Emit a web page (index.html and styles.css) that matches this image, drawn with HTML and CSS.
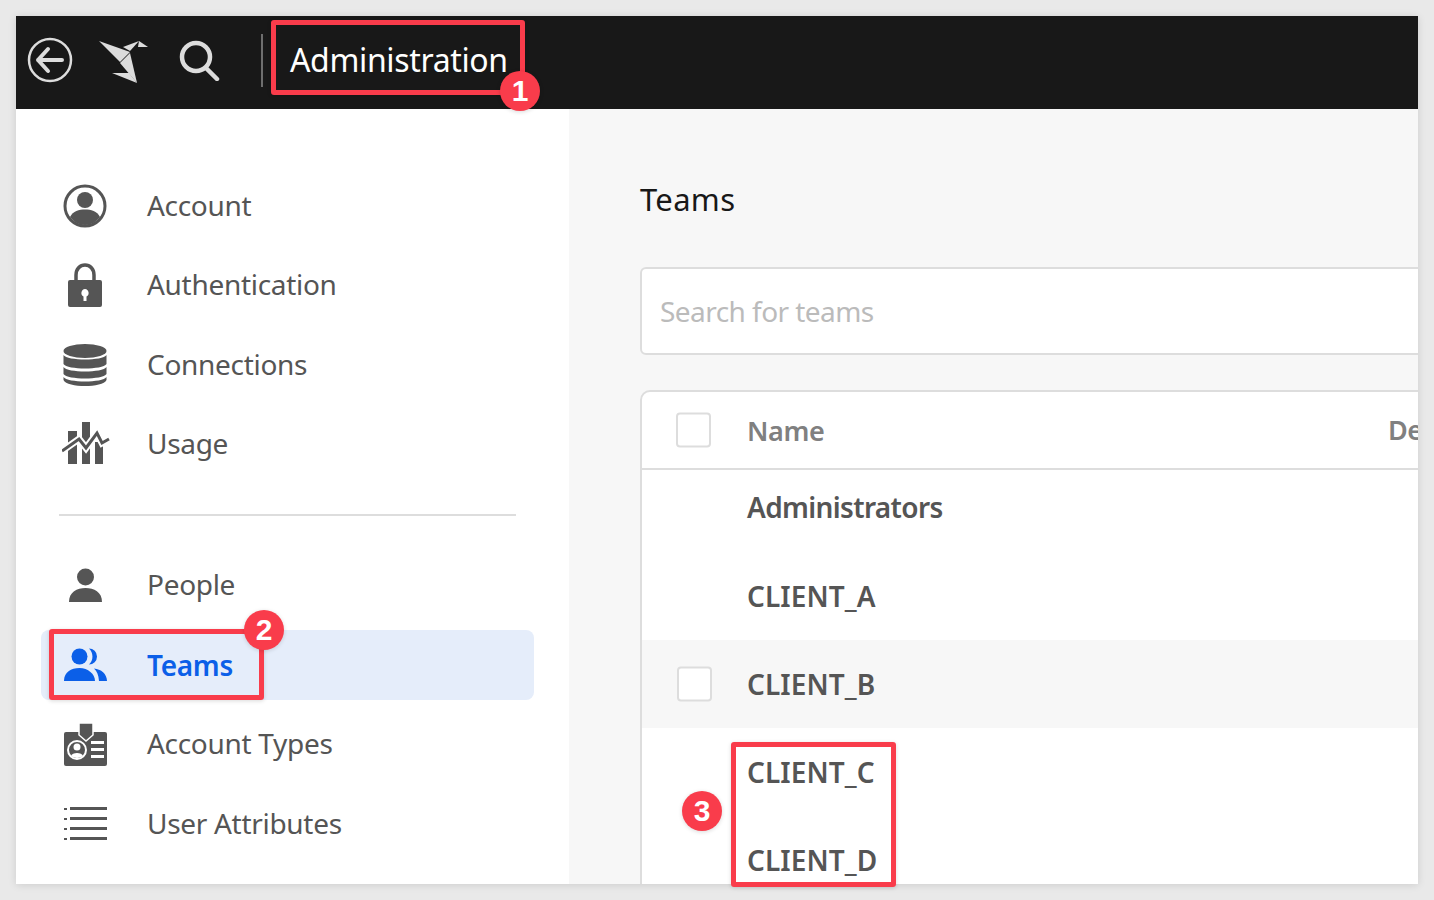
FILE: index.html
```html
<!DOCTYPE html>
<html lang="en">

<head>
    <meta charset="UTF-8">
    <title>Administration</title>
    <link rel="stylesheet" href="styles.css">
</head>

<body>
    <div class="page">
        <div class="window">
            <header class="topbar">
                <svg class="top-icon back-icon" width="46" height="46" viewBox="0 0 46 46">
                    <circle cx="23" cy="23" r="21" fill="none" stroke="#dcdcdc" stroke-width="2.500"/>
                    <path d="M11 23H35M21 12L11 23L21 34" fill="none" stroke="#dcdcdc" stroke-width="4" stroke-linecap="round" stroke-linejoin="round"/>
                </svg>
                <svg class="top-icon logo-icon" width="50" height="44" viewBox="0 0 50 44">
                    <path d="M1 0L32 11L22 21Z" fill="#dcdcdc"/>
                    <path d="M25 6L41 0L32 10Z" fill="#dcdcdc"/>
                    <path d="M41 0L50 6L40 6Z" fill="#dcdcdc"/>
                    <path d="M22 22L32 12L39 42Z" fill="#dcdcdc"/>
                    <path d="M14 32L31 32L39 42Z" fill="#dcdcdc"/>
                </svg>
                <svg class="top-icon search-icon" width="42" height="42" viewBox="0 0 42 42">
                    <circle cx="18" cy="18" r="14" fill="none" stroke="#dcdcdc" stroke-width="4.500"/>
                    <path d="M28 29L39 40" stroke="#dcdcdc" stroke-width="4.500" stroke-linecap="round"/>
                </svg>
                <div class="top-divider"></div>
                <div class="top-title">Administration</div>
            </header>

            <div class="content">
                <nav class="sidebar">
                    <a class="nav-item">
                        <svg width="44" height="44" viewBox="0 0 44 44">
                            <circle cx="22" cy="22" r="20" fill="none" stroke="#555" stroke-width="3"/>
                            <circle cx="22" cy="16" r="8" fill="#555"/>
                            <path d="M7 33C10 27 16 25.500 22 25.500C28 25.500 34 27 37 33C33 38 28 41 22 41C16 41 11 38 7 33Z" fill="#555"/>
                        </svg>
                        <span>Account</span>
                    </a>
                    <a class="nav-item">
                        <svg width="44" height="44" viewBox="0 0 44 44">
                            <path d="M13 20V12C13 6 17 2 22 2C27 2 31 6 31 12V20" fill="none" stroke="#555" stroke-width="3.500"/>
                            <path fill-rule="evenodd" d="M7 17H37A2 2 0 0 1 39 19V42A2 2 0 0 1 37 44H7A2 2 0 0 1 5 42V19A2 2 0 0 1 7 17ZM22 26A4 4 0 0 0 20.500 33.500V38H23.500V33.500A4 4 0 0 0 22 26Z" fill="#555"/>
                        </svg>
                        <span>Authentication</span>
                    </a>
                    <a class="nav-item">
                        <svg width="44" height="44" viewBox="0 0 44 44">
                            <ellipse cx="22" cy="8" rx="21.500" ry="7" fill="#555"/>
                            <path d="M0.500 12C4 18 40 18 43.500 12V21C40 27 4 27 0.500 21Z" fill="#555"/>
                            <path d="M0.500 24C4 30 40 30 43.500 24V31C40 37 4 37 0.500 31Z" fill="#555"/>
                            <path d="M0.500 34C4 40 40 40 43.500 34V37C40 45 4 45 0.500 37Z" fill="#555"/>
                        </svg>
                        <span>Connections</span>
                    </a>
                    <a class="nav-item">
                        <svg class="wide-icon" width="48" height="44" viewBox="0 0 48 44">
                            <path d="M6 9H15V42H6ZM20 0H28V42H20ZM33 20H41V42H33Z" fill="#555"/>
                            <path d="M0 29L17 17L24 26L35 11L40 21L47 17" fill="none" stroke="#fff" stroke-width="7"/>
                            <path d="M0 29L17 17L24 26L35 11L40 21L47 17" fill="none" stroke="#555" stroke-width="3"/>
                        </svg>
                        <span>Usage</span>
                    </a>

                    <div class="nav-divider"></div>

                    <a class="nav-item">
                        <svg width="44" height="44" viewBox="0 0 44 44">
                            <circle cx="22.500" cy="14" r="8.500" fill="#555"/>
                            <path d="M6 39C6 29 14 25 22.500 25C31 25 39 29 39 39Z" fill="#555"/>
                        </svg>
                        <span>People</span>
                    </a>
                    <a class="nav-item active">
                        <svg width="44" height="44" viewBox="0 0 44 44">
                            <circle cx="16.500" cy="13.500" r="8" fill="#0b5fe8"/>
                            <path d="M26 5.500A8 8 0 0 1 26 21.500A11 11 0 0 0 26 5.500Z" fill="#0b5fe8"/>
                            <path d="M1 38C1 29 8 25 16.500 25C25 25 32 31 32 38Z" fill="#0b5fe8"/>
                            <path d="M31 25.500C38 26 44 31 44 38H36C35.500 32 34 28 31 25.500Z" fill="#0b5fe8"/>
                        </svg>
                        <span>Teams</span>
                    </a>
                    <a class="nav-item">
                        <svg width="44" height="44" viewBox="0 0 44 44">
                            <rect x="1" y="10" width="43" height="34" rx="2" fill="#555"/>
                            <path d="M16 1H30V13L23 19L16 13Z" fill="#555" stroke="#fff" stroke-width="1.500"/>
                            <circle cx="14" cy="28" r="9" fill="none" stroke="#fff" stroke-width="2"/>
                            <circle cx="14" cy="25" r="3.500" fill="#fff"/>
                            <path d="M8 34C9 30 19 30 20 34C17 36.500 11 36.500 8 34Z" fill="#fff"/>
                            <path d="M28 19H41V22H28ZM28 26H41V29H28ZM28 33H41V36H28Z" fill="#fff"/>
                        </svg>
                        <span>Account Types</span>
                    </a>
                    <a class="nav-item">
                        <svg width="44" height="36" viewBox="0 0 44 36">
                            <path d="M1 2H4V4H1ZM7 1H44V4H7ZM1 12H4V14H1ZM7 11H44V14H7ZM1 22H4V24H1ZM7 21H44V24H7ZM1 32H4V34H1ZM7 31H44V34H7Z" fill="#555"/>
                        </svg>
                        <span>User Attributes</span>
                    </a>
                </nav>

                <main class="main">
                    <h1 class="main-title">Teams</h1>
                    <div class="search-box">Search for teams</div>
                    <div class="team-table">
                        <div class="table-head">
                            <div class="checkbox"></div>
                            <div class="col-name">Name</div>
                            <div class="col-desc">Description</div>
                        </div>
                        <div class="table-row first-row"><div class="col-name admin-name">Administrators</div></div>
                        <div class="table-row"><div class="col-name">CLIENT_A</div></div>
                        <div class="table-row hover-row"><div class="checkbox"></div><div class="col-name">CLIENT_B</div></div>
                        <div class="table-row"><div class="col-name">CLIENT_C</div></div>
                        <div class="table-row"><div class="col-name">CLIENT_D</div></div>
                    </div>
                </main>
            </div>
        </div>

        <!-- callouts drawn on top of the screenshot -->
        <div class="callout-box box-one"></div>
        <div class="callout-box box-two"></div>
        <div class="callout-box box-three"></div>
        <div class="callout-dot dot-one">1</div>
        <div class="callout-dot dot-two">2</div>
        <div class="callout-dot dot-three">3</div>
    </div>
</body>

</html>
```
FILE: styles.css
```css
html,
body {
    margin: 0;
    padding: 0;
    height: 900px;
    overflow: hidden;
}

body {
    font-family: "Noto Sans", Arial, sans-serif;
    background-color: #e9e9e9;
}

.page {
    position: relative;
    width: 1434px;
    height: 900px;
    padding: 16px;
    box-sizing: border-box;
}

.window {
    height: 868px;
    width: 1402px;
    overflow: hidden;
    background: white;
    box-shadow: 0 1px 8px rgba(0, 0, 0, 0.12);
    display: flex;
    flex-direction: column;
}

.topbar {
    height: 93px;
    flex-shrink: 0;
    background: #181818;
    display: flex;
    align-items: center;
}

.top-icon {
    flex-shrink: 0;
}

.back-icon {
    margin-left: 11px;
    margin-bottom: 5px;
}

.logo-icon {
    margin-left: 25px;
}

.search-icon {
    margin-left: 30px;
    margin-bottom: 5px;
}

.top-divider {
    width: 2px;
    height: 53px;
    background: #6e6e6e;
    margin-left: 41px;
    margin-bottom: 4px;
}

.top-title {
    color: white;
    font-size: 32px;
    margin-left: 27px;
    margin-bottom: 6px;
    letter-spacing: -0.35px;
}

.content {
    flex: 1;
    display: flex;
    min-height: 0;
}

.sidebar {
    width: 553px;
    flex-shrink: 0;
    box-sizing: border-box;
    padding: 61.5px 35px 0 25px;
}

.nav-item {
    height: 70px;
    margin-bottom: 9.5px;
    border-radius: 8px;
    display: flex;
    align-items: center;
    color: #555;
    font-size: 28px;
    letter-spacing: -0.3px;
    position: relative;
}

.nav-item svg {
    position: absolute;
    left: 22px;
    top: 50%;
    transform: translateY(-50%);
}

.nav-item svg.wide-icon {
    left: 21px;
}

.nav-item span {
    margin-left: 106px;
    margin-bottom: 2px;
}

.nav-item.active {
    background: #e5edfa;
    color: #0b5fe8;
    font-weight: 600;
}

.nav-item.active span {
    margin-bottom: 0;
    margin-top: 1px;
}

.nav-divider {
    height: 2px;
    background: #ddd;
    margin: 34.5px 18px 34.5px 18px;
}

.main {
    flex: 1;
    min-width: 0;
    background: #f7f7f7;
    padding-left: 71px;
    overflow: hidden;
}

.main-title {
    margin: 0;
    padding-top: 69px;
    font-size: 31px;
    line-height: 42px;
    font-weight: 400;
    color: #181818;
    letter-spacing: 0.3px;
}

.search-box {
    margin-top: 47px;
    width: 1000px;
    height: 88px;
    box-sizing: border-box;
    background: white;
    border: 2px solid #ddd;
    border-radius: 6px;
    padding-left: 18px;
    display: flex;
    align-items: center;
    color: #bbb;
    font-size: 28px;
    letter-spacing: -0.55px;
}

.team-table {
    margin-top: 35px;
    width: 1000px;
    background: white;
    border: 2px solid #ddd;
    border-radius: 10px 0 0 0;
}

.table-head {
    height: 76px;
    border-bottom: 2px solid #ddd;
    display: flex;
    align-items: center;
    position: relative;
    font-size: 27px;
    font-weight: 600;
    color: #808080;
}

.table-row {
    height: 88px;
    display: flex;
    align-items: center;
    position: relative;
    font-size: 28px;
    font-weight: 600;
    color: #555;
}

.first-row {
    height: 76px;
    padding-bottom: 6px;
}

.hover-row {
    background: #f7f7f7;
}

.checkbox {
    position: absolute;
    left: 34px;
    top: 50%;
    transform: translateY(-50%);
    width: 35px;
    height: 35px;
    box-sizing: border-box;
    background: white;
    border: 2px solid #ddd;
    border-radius: 4px;
}

.hover-row .checkbox {
    left: 35px;
}

.col-name {
    margin-left: 105px;
    letter-spacing: 0.1px;
}

.admin-name {
    margin-bottom: 2px;
    letter-spacing: -0.65px;
}

.table-head .col-name {
    letter-spacing: -0.4px;
}

.col-desc {
    position: absolute;
    left: 746px;
    margin-bottom: 2px;
    letter-spacing: -0.5px;
}

.callout-box {
    position: absolute;
    box-sizing: border-box;
    border: 5px solid #f93c4b;
    border-radius: 3px;
    box-shadow: 0 1px 4px rgba(0, 0, 0, 0.15);
}

.box-one {
    left: 271px;
    top: 20px;
    width: 254px;
    height: 75px;
}

.box-two {
    left: 49px;
    top: 629px;
    width: 215px;
    height: 71px;
}

.box-three {
    left: 731px;
    top: 742px;
    width: 165px;
    height: 145px;
}

.callout-dot {
    position: absolute;
    width: 40px;
    height: 40px;
    border-radius: 50%;
    background: #f93c4b;
    color: white;
    font-family: "Liberation Sans", Arial, sans-serif;
    font-weight: 700;
    font-size: 30px;
    line-height: 40px;
    text-align: center;
    box-shadow: 0 1px 4px rgba(0, 0, 0, 0.15);
}

.dot-one {
    left: 500px;
    top: 71px;
}

.dot-two {
    left: 244px;
    top: 610px;
}

.dot-three {
    left: 682px;
    top: 791px;
}
```
